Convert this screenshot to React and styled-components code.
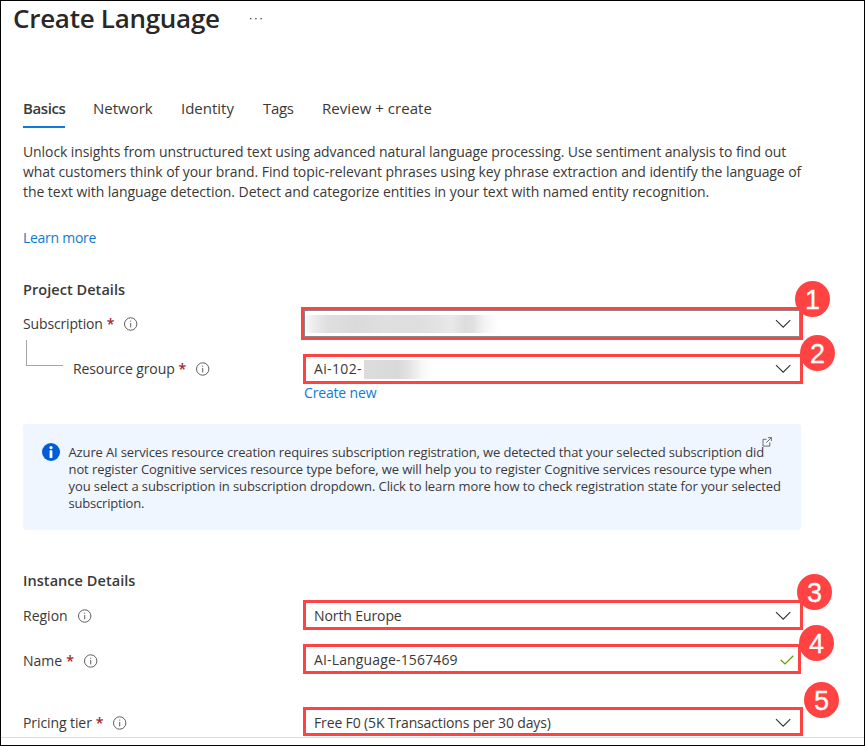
import React from "react";
import styled, { createGlobalStyle } from "styled-components";

const RED = "#ff4343";

const GlobalStyle = createGlobalStyle`
  * { box-sizing: border-box; }
  body {
    margin: 0;
    background: #fff;
    color: #3a3938;
    font-family: "Open Sans", "Noto Sans", sans-serif;
    font-size: 14px;
    line-height: 20px;
  }
`;

const Frame = styled.div`
  width: 865px;
  height: 746px;
  border: 1px solid #000;
  overflow: hidden;
  display: flex;
  flex-direction: column;
`;

const Header = styled.header`
  display: flex;
  align-items: center;
  height: 34px;
  padding-left: 12px;
  gap: 29px;
`;

const Title = styled.h1`
  margin: 0;
  font-size: 26px;
  line-height: 34px;
  font-weight: 600;
  letter-spacing: -0.28px;
  color: #292827;
`;

const Main = styled.main`
  flex: 1;
  padding-left: 22px;
  display: flex;
  flex-direction: column;
  align-items: flex-start;
`;

const Tabs = styled.nav`
  display: flex;
  gap: 28px;
  margin-top: 61px;
  height: 32px;
`;

const Tab = styled.a`
  width: ${(p) => p.$width}px;
  height: 32px;
  line-height: 24px;
  font-size: 15px;
  white-space: nowrap;
  letter-spacing: ${(p) => p.$spacing || 0}px;
  font-weight: ${(p) => (p.$active ? 600 : 400)};
  border-bottom: 2px solid ${(p) => (p.$active ? "#0f7bd8" : "transparent")};
`;

const Description = styled.p`
  margin: 14px 0 0;
`;

const Line = styled.span`
  display: block;
  white-space: nowrap;
  letter-spacing: ${(p) => p.$spacing || 0}px;
`;

const Link = styled.a`
  display: block;
  color: #0f7ad3;
  white-space: nowrap;
  letter-spacing: ${(p) => p.$spacing || 0}px;
`;

const LearnMore = styled(Link)`
  margin-top: 26px;
`;

const CreateNew = styled(Link)`
  margin: -1px 0 0 281px;
`;

const SectionTitle = styled.h2`
  margin: ${(p) => p.$top}px 0 0;
  font-size: 14.5px;
  line-height: 20px;
  font-weight: 600;
  letter-spacing: 0.05px;
`;

const FormRow = styled.div`
  display: flex;
  align-items: center;
  width: 780px;
  height: ${(p) => p.$height || 30}px;
  margin-top: ${(p) => p.$top}px;
`;

const Label = styled.label`
  display: flex;
  align-items: center;
  width: ${(p) => p.$width || 280}px;
  height: 20px;
  margin-top: ${(p) => p.$drop || 0}px;
  white-space: nowrap;
  letter-spacing: ${(p) => p.$spacing || 0}px;

  svg { margin-left: 10px; }
`;

const Required = styled.span`
  margin-left: 4px;
  color: #a4262c;
  font-weight: 600;
`;

const Connector = styled.div`
  align-self: flex-start;
  width: 37px;
  height: 26px;
  margin: -14px 10px 0 3px;
  border-left: 1px solid #a6a5a4;
  border-bottom: 1px solid #a6a5a4;
`;

const Field = styled.div`
  position: relative;
  display: flex;
  align-items: center;
  width: ${(p) => p.$width || 500}px;
  height: 100%;
  border: 3px solid ${RED};
  box-shadow: ${(p) => (p.$focused ? "inset 0 0 0 1px #8a8886" : "none")};
  padding: ${(p) => p.$drop || 0}px ${(p) => p.$right || 9}px 0 ${(p) => (p.$flush ? 1 : 8)}px;
`;

const Value = styled.span`
  flex: none;
  white-space: nowrap;
  letter-spacing: ${(p) => p.$spacing || 0}px;
`;

const Redaction = styled.span`
  flex: none;
  width: ${(p) => p.$width}px;
  height: ${(p) => p.$height}px;
  margin-left: ${(p) => p.$gap || 0}px;
  background: ${(p) => p.$fill};
`;

const Spacer = styled.span`
  flex: 1;
`;

const StepBadge = styled.span`
  position: absolute;
  left: ${(p) => p.$x}px;
  top: ${(p) => p.$y}px;
  width: 35px;
  height: 36px;
  border-radius: 50%;
  background: ${RED};
  color: #fff;
  font: 27px/38px "Liberation Sans", Arial, sans-serif;
  -webkit-text-stroke: 0.3px #fff;
  text-align: center;
  z-index: 1;
`;

const Banner = styled.aside`
  display: flex;
  width: 778px;
  height: 106px;
  margin-top: 21px;
  padding: 19px 0 0 19px;
  gap: 8.5px;
  border-radius: 3px;
  background: #f0f6ff;
`;

const BannerText = styled.p`
  position: relative;
  margin: 1px 0 0;
  font-size: 13px;
  line-height: 17px;

  svg {
    position: absolute;
    left: 693px;
    top: -7px;
  }
`;

const Footer = styled.footer`
  height: 8px;
  border-top: 1px solid #dcdbda;
`;

const InfoIcon = () => (
  <svg width="14" height="14" viewBox="0 0 14 14" fill="none" stroke="#605e5c">
    <circle cx="6.7" cy="7" r="6.2" strokeWidth="1" />
    <path d="M6.7 6v4.4M6.7 3.6v1.1" strokeWidth="1" />
  </svg>
);

const ChevronIcon = () => (
  <svg width="16" height="10" viewBox="0 0 16 10" fill="none" stroke="#323130" strokeWidth="1.1">
    <path d="M1 1.2 8.2 8.2 15.3 1.2" />
  </svg>
);

const CheckIcon = () => (
  <svg width="14" height="10" viewBox="0 0 14 10" fill="none" stroke="#57a300" strokeWidth="1.2">
    <path d="M.8 5 5 9 13.3.8" />
  </svg>
);

const BannerIcon = () => (
  <svg width="18" height="18" viewBox="0 0 18 18">
    <circle cx="9" cy="9" r="9" fill="#015cda" />
    <circle cx="9" cy="4.6" r="1.6" fill="#fff" />
    <rect x="7.6" y="7.3" width="2.8" height="7.6" rx=".5" fill="#fff" />
  </svg>
);

const ExternalIcon = () => (
  <svg width="10" height="10" viewBox="0 0 10 10" fill="none" stroke="#605e5c" strokeWidth=".9">
    <path d="M4.5 2.3H1v6.8h6.8V5.4M6 .6h3.4V4M9.3.7 4.3 5.7" />
  </svg>
);

const MoreIcon = () => (
  <svg width="14" height="4" viewBox="0 0 14 4" fill="#484644">
    <rect x="1" y="2" width="1.4" height="1.3" />
    <rect x="6.2" y="2" width="1.4" height="1.3" />
    <rect x="11.4" y="2" width="1.4" height="1.3" />
  </svg>
);

const subscriptionFill =
  "linear-gradient(90deg,#fafafa 0,#ececec 9px,#dfdfdf 22px,#dadada 50px,#dfdfdf 80px,#dedede 112px,#e3e3e3 132px,#e9e9e9 146px,#dddddd 160px,#e0e0e0 168px,#f3f3f3 179px,#fff 194px)";
const groupFill =
  "linear-gradient(90deg,#dcdcdc 0,#d9d9d9 34px,#e4e4e4 46px,#f7f7f7 58px,#fff 69px)";

export default function App() {
  return (
    <Frame>
      <GlobalStyle />
      <Header>
        <Title>Create Language</Title>
        <MoreIcon />
      </Header>
      <Main>
        <Tabs>
          <Tab $active $width={42} $spacing={-0.4}>Basics</Tab>
          <Tab $width={60}>Network</Tab>
          <Tab $width={54}>Identity</Tab>
          <Tab $width={31} $spacing={-0.3}>Tags</Tab>
          <Tab $width={110} $spacing={0.05}>Review + create</Tab>
        </Tabs>

        <Description>
          <Line $spacing={-0.087}>Unlock insights from unstructured text using advanced natural language processing. Use sentiment analysis to find out</Line>
          <Line $spacing={-0.075}>what customers think of your brand. Find topic-relevant phrases using key phrase extraction and identify the language of</Line>
          <Line $spacing={-0.05}>the text with language detection. Detect and categorize entities in your text with named entity recognition.</Line>
        </Description>
        <LearnMore $spacing={-0.28}>Learn more</LearnMore>

        <SectionTitle $top={32}>Project Details</SectionTitle>
        <FormRow $top={7} $height={33}>
          <Label $width={278} $spacing={-0.15}>
            Subscription<Required>*</Required><InfoIcon />
          </Label>
          <Field $width={502} $focused $flush>
            <Redaction $width={195} $height={18} $fill={subscriptionFill} />
            <Spacer />
            <ChevronIcon />
            <StepBadge $x={491} $y={-29}>1</StepBadge>
          </Field>
        </FormRow>
        <FormRow $top={14}>
          <Connector />
          <Label $width={230} $spacing={-0.1}>
            Resource group<Required>*</Required><InfoIcon />
          </Label>
          <Field>
            <Value $spacing={0.35}>Ai-102-</Value>
            <Redaction $width={70} $height={19} $gap={2} $fill={groupFill} />
            <Spacer />
            <ChevronIcon />
            <StepBadge $x={494} $y={-22}>2</StepBadge>
          </Field>
        </FormRow>
        <CreateNew $spacing={-0.16}>Create new</CreateNew>

        <Banner>
          <BannerIcon />
          <BannerText>
            <Line $spacing={-0.133}>Azure AI services resource creation requires subscription registration, we detected that your selected subscription did</Line>
            <Line $spacing={-0.09}>not register Cognitive services resource type before, we will help you to register Cognitive services resource type when</Line>
            <Line $spacing={-0.1}>you select a subscription in subscription dropdown. Click to learn more how to check registration state for your selected</Line>
            <Line $spacing={-0.2}>subscription.</Line>
            <ExternalIcon />
          </BannerText>
        </Banner>

        <SectionTitle $top={41}>Instance Details</SectionTitle>
        <FormRow $top={9}>
          <Label $drop={2}>Region<InfoIcon /></Label>
          <Field $drop={1}>
            <Value $spacing={-0.1}>North Europe</Value>
            <Spacer />
            <ChevronIcon />
            <StepBadge $x={491} $y={-29}>3</StepBadge>
          </Field>
        </FormRow>
        <FormRow $top={14}>
          <Label $drop={3}>Name<Required>*</Required><InfoIcon /></Label>
          <Field $width={498} $right={4} $drop={1}>
            <Value $spacing={0.15}>AI-Language-1567469</Value>
            <Spacer />
            <CheckIcon />
            <StepBadge $x={493} $y={-22}>4</StepBadge>
          </Field>
        </FormRow>
        <FormRow $top={33} $height={29}>
          <Label $drop={2} $spacing={-0.09}>Pricing tier<Required>*</Required><InfoIcon /></Label>
          <Field $drop={2}>
            <Value $spacing={-0.14}>Free F0 (5K Transactions per 30 days)</Value>
            <Spacer />
            <ChevronIcon />
            <StepBadge $x={498} $y={-28}>5</StepBadge>
          </Field>
        </FormRow>
      </Main>
      <Footer />
    </Frame>
  );
}
